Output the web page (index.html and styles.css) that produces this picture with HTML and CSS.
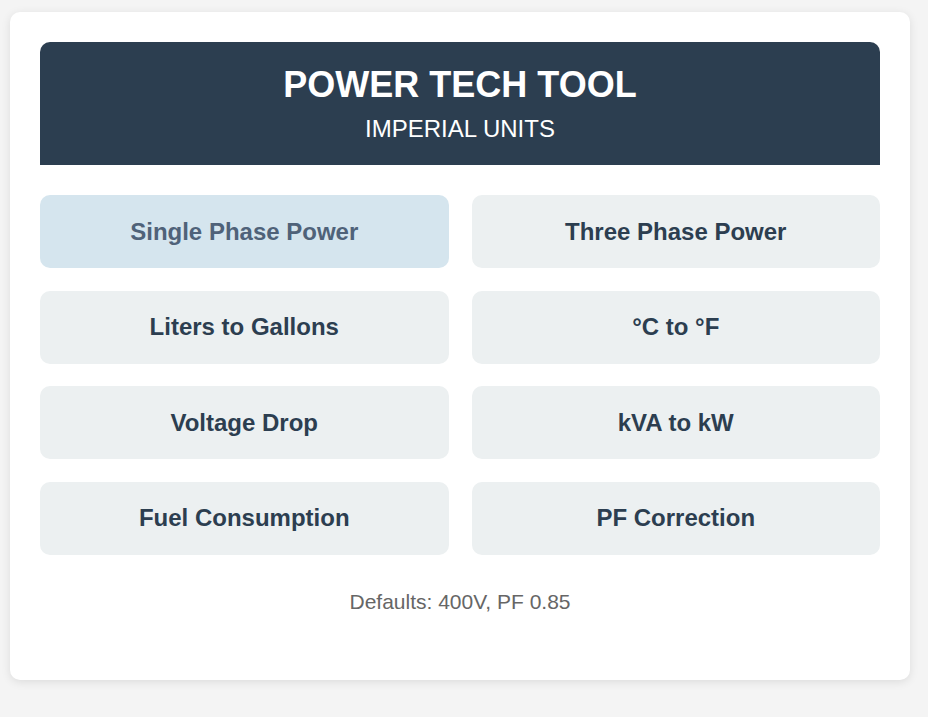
FILE: index.html
```html
<!DOCTYPE html>
<html lang="en">
<head>
<meta charset="utf-8">
<title>Power Tech Tool</title>
<link rel="stylesheet" href="styles.css">
</head>
<body>
<main class="card">
  <header class="banner">
    <h1 class="banner-title">POWER TECH TOOL</h1>
    <p class="banner-sub">IMPERIAL UNITS</p>
  </header>
  <nav class="tools">
    <button class="tool tool-active">Single Phase Power</button>
    <button class="tool">Three Phase Power</button>
    <button class="tool">Liters to Gallons</button>
    <button class="tool">°C to °F</button>
    <button class="tool">Voltage Drop</button>
    <button class="tool">kVA to kW</button>
    <button class="tool">Fuel Consumption</button>
    <button class="tool">PF Correction</button>
  </nav>
  <p class="defaults">Defaults: 400V, PF 0.85</p>
</main>
</body>
</html>
```
FILE: styles.css
```css
html, body {
  margin: 0;
  padding: 0;
}
body {
  background: #f4f4f4;
  font-family: "Liberation Sans", Arial, sans-serif;
  padding: 12px 10px;
}
.card {
  width: 900px;
  box-sizing: border-box;
  background: #ffffff;
  border-radius: 10px;
  box-shadow: 0 2px 10px rgba(0, 0, 0, 0.1);
  padding: 30px;
}
.banner {
  background: #2c3e50;
  color: #ffffff;
  border-radius: 10px 10px 0 0;
  text-align: center;
  padding: 22px 20px 22px;
}
.banner-title {
  margin: 0 0 9px;
  font-size: 36px;
  font-weight: bold;
}
.banner-sub {
  margin: 0;
  font-size: 24px;
}
.tools {
  display: grid;
  grid-template-columns: 1fr 1fr;
  column-gap: 23px;
  row-gap: 22.5px;
  margin-top: 30px;
}
.tool {
  font-family: inherit;
  font-size: 24px;
  font-weight: bold;
  color: #2c3e50;
  background: #ecf0f1;
  border: none;
  border-radius: 10px;
  padding: 22.5px 10px;
  line-height: normal;
}
.tool-active {
  background: #d5e5ee;
  color: #4f6279;
}
.defaults {
  margin: 35px 0 36px;
  text-align: center;
  color: #666666;
  font-size: 21px;
}
```
